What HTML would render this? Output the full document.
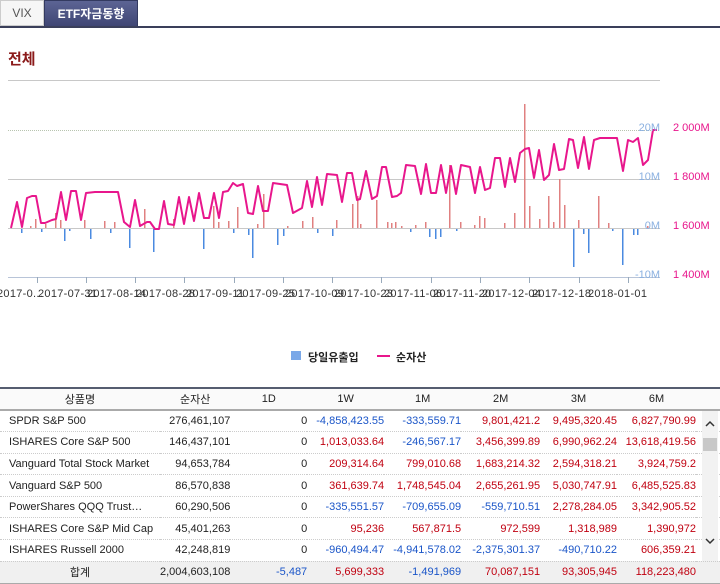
<!DOCTYPE html>
<html><head><meta charset="utf-8">
<style>
*{margin:0;padding:0;box-sizing:border-box}
body{width:720px;height:583px;background:#fff;font-family:"Liberation Sans","Noto Sans CJK KR","NanumGothic",sans-serif;position:relative;overflow:hidden;font-size:11px;color:#222}
.tab1{position:absolute;left:0;top:0;width:44px;height:26px;background:#f6f6f6;border:1px solid #ccc;text-align:center;line-height:25px;color:#555;font-size:12px}
.tab2{position:absolute;left:44px;top:0;width:94px;height:27px;background:linear-gradient(#5c6494,#3f4674);color:#fff;font-weight:bold;text-align:center;line-height:26px;font-size:12px;border:1px solid #333a60}
.bar{position:absolute;left:0;top:26px;width:720px;height:2px;background:#3a3f5a}
.title{position:absolute;left:8px;top:48px;color:#8b1a1a;font-size:15px;font-weight:bold}
svg{position:absolute;left:0;top:0}
table{position:absolute;left:0;top:387px;width:720px;border-collapse:collapse;border-top:2px solid #555d70}
td,th{height:21.6px;font-weight:normal;font-size:11px;white-space:nowrap;border-bottom:1px dotted #ccc;padding:0}
th{background:#fafafa;text-align:center;height:22px;border-bottom:2px solid #aaa}
td{text-align:right;padding-right:0}
td.n{text-align:left;padding-left:9px}
.b{color:#1a55c8}.r{color:#c00010}
tr.tot td{background:#f0f0f0;border-bottom:1px solid #aaa;height:22px}
.sb{position:absolute;left:702px;top:411px;width:16px;height:150px;background:#f2f2f2}
</style></head><body>
<div class="tab1">VIX</div><div class="tab2">ETF자금동향</div><div class="bar"></div>
<div class="title">전체</div>
<svg width="720" height="380" viewBox="0 0 720 380">
<g stroke="#c8c8c8" stroke-width="1">
<line x1="8" y1="80.5" x2="660" y2="80.5"/>
<line x1="8" y1="130.5" x2="660" y2="130.5" stroke="#b8c4b0" stroke-dasharray="1 1"/>
<line x1="8" y1="179.5" x2="660" y2="179.5"/>
<line x1="8" y1="228.5" x2="660" y2="228.5"/>
<line x1="8" y1="277.5" x2="660" y2="277.5" stroke="#b8c4d8"/>
</g>
<g stroke="#9ab" stroke-width="1">
<line x1="37.5" y1="277" x2="37.5" y2="283"/><line x1="86.5" y1="277" x2="86.5" y2="283"/><line x1="135.5" y1="277" x2="135.5" y2="283"/><line x1="184.5" y1="277" x2="184.5" y2="283"/><line x1="234.5" y1="277" x2="234.5" y2="283"/><line x1="283.5" y1="277" x2="283.5" y2="283"/><line x1="332.5" y1="277" x2="332.5" y2="283"/><line x1="381.5" y1="277" x2="381.5" y2="283"/><line x1="431.5" y1="277" x2="431.5" y2="283"/><line x1="480.5" y1="277" x2="480.5" y2="283"/><line x1="529.5" y1="277" x2="529.5" y2="283"/><line x1="579.5" y1="277" x2="579.5" y2="283"/><line x1="628.5" y1="277" x2="628.5" y2="283"/>
</g>
<g fill="#e08080">
<rect x="30" y="226" width="1.5" height="2"/><rect x="35" y="219" width="1.5" height="9"/><rect x="45" y="224" width="1.5" height="4"/><rect x="55" y="213" width="1.5" height="15"/><rect x="60" y="220" width="1.5" height="8"/><rect x="84" y="220" width="1.5" height="8"/><rect x="104" y="221" width="1.5" height="7"/><rect x="114" y="222" width="1.5" height="6"/><rect x="144" y="209" width="1.5" height="19"/><rect x="173" y="219" width="1.5" height="9"/><rect x="213" y="206" width="1.5" height="22"/><rect x="218" y="222" width="1.5" height="6"/><rect x="228" y="221" width="1.5" height="7"/><rect x="237" y="207" width="1.5" height="21"/><rect x="257" y="224" width="1.5" height="4"/><rect x="263" y="194" width="1.5" height="34"/><rect x="287" y="226" width="1.5" height="2"/><rect x="302" y="221" width="1.5" height="7"/><rect x="312" y="217" width="1.5" height="11"/><rect x="336" y="220" width="1.5" height="8"/><rect x="352" y="204" width="1.5" height="24"/><rect x="357" y="196" width="1.5" height="32"/>
<rect x="360" y="224" width="1.5" height="4"/><rect x="376" y="200" width="1.5" height="28"/><rect x="387" y="222" width="1.5" height="6"/><rect x="391" y="223" width="1.5" height="5"/><rect x="395" y="222" width="1.5" height="6"/><rect x="401" y="226" width="1.5" height="2"/><rect x="415" y="225" width="1.5" height="3"/><rect x="425" y="222" width="1.5" height="6"/><rect x="449" y="165" width="1.5" height="63"/><rect x="460" y="222" width="1.5" height="6"/><rect x="474" y="225" width="1.5" height="3"/><rect x="479" y="216" width="1.5" height="12"/><rect x="484" y="218" width="1.5" height="10"/><rect x="504" y="223" width="1.5" height="5"/><rect x="514" y="213" width="1.5" height="15"/><rect x="524" y="104" width="1.5" height="124"/><rect x="529" y="206" width="1.5" height="22"/><rect x="539" y="219" width="1.5" height="9"/><rect x="548" y="196" width="1.5" height="32"/><rect x="553" y="222" width="1.5" height="6"/><rect x="559" y="179" width="1.5" height="49"/><rect x="564" y="205" width="1.5" height="23"/><rect x="578" y="220" width="1.5" height="8"/><rect x="598" y="196" width="1.5" height="32"/><rect x="608" y="223" width="1.5" height="5"/><rect x="647" y="226" width="1.5" height="2"/>
</g>
<g fill="#4a8ae0">
<rect x="21" y="229" width="1.5" height="4"/><rect x="41" y="229" width="1.5" height="3"/><rect x="64" y="229" width="1.5" height="12"/><rect x="69" y="229" width="1.5" height="2"/><rect x="90" y="229" width="1.5" height="10"/><rect x="110" y="229" width="1.5" height="4"/><rect x="129" y="229" width="1.5" height="19"/><rect x="153" y="229" width="1.5" height="23"/><rect x="203" y="229" width="1.5" height="20"/><rect x="233" y="229" width="1.5" height="4"/><rect x="248" y="229" width="1.5" height="6"/><rect x="252" y="229" width="1.5" height="29"/><rect x="277" y="229" width="1.5" height="16"/><rect x="283" y="229" width="1.5" height="7"/><rect x="317" y="229" width="1.5" height="4"/><rect x="332" y="229" width="1.5" height="7"/>
<rect x="410" y="229" width="1.5" height="3"/><rect x="429" y="229" width="1.5" height="8"/><rect x="435" y="229" width="1.5" height="10"/><rect x="440" y="229" width="1.5" height="8"/><rect x="456" y="229" width="1.5" height="2"/><rect x="573" y="229" width="1.5" height="38"/><rect x="583" y="229" width="1.5" height="5"/><rect x="588" y="229" width="1.5" height="24"/><rect x="612" y="229" width="1.5" height="2"/><rect x="622" y="229" width="1.5" height="36"/><rect x="633" y="229" width="1.5" height="6"/><rect x="637" y="229" width="1.5" height="6"/>
</g>
<polyline fill="none" stroke="#e8168c" stroke-width="2" stroke-linejoin="round" points="11,228 17,202 22,227 27,198 32,196 36,196 41,223 45,223 52,220 56,219 61,192 66,220 71,191 76,191 81,220 86,193 95,192 118,192 124,222 130,227 135,200 140,226 147,222 150,222 155,229 159,229 164,201 168,224 174,225 179,197 184,224 189,197 194,221 199,193 204,218 209,218 214,193 219,218 223,192 228,191 233,183 237,186 243,184 248,213 253,214 258,186 263,211 268,211 273,183 287,185 293,213 302,208 307,181 312,207 317,177 322,205 327,174 337,175 342,202 347,173 352,173 357,200 360,199 366,171 372,199 377,196 382,167 386,167 392,197 397,196 401,193 406,165 415,166 421,194 426,164 431,193 436,193 441,165 446,193 451,166 456,194 461,165 470,167 475,193 480,167 485,190 490,188 495,158 500,158 505,187 510,158 515,182 520,153 525,149 529,148 534,178 539,150 544,180 549,175 554,144 559,170 564,169 569,139 573,140 578,168 584,137 589,169 594,140 600,138 617,138 623,171 628,140 633,142 638,138 643,165 648,160 653,130 657,130"/>
<g font-size="11" fill="#8ab0e0" text-anchor="end">
<text x="660" y="131">20M</text><text x="660" y="180">10M</text><text x="660" y="229">0M</text><text x="660" y="278">-10M</text>
</g>
<g font-size="11" fill="#e8168c">
<text x="673" y="131">2 000M</text><text x="673" y="180">1 800M</text><text x="673" y="229">1 600M</text><text x="673" y="278">1 400M</text>
</g>
<g font-size="11" fill="#333" letter-spacing="0.3">
<text x="-3" y="297">2017-0...</text><text x="38" y="297">2017-07-31</text><text x="87" y="297">2017-08-14</text><text x="136" y="297">2017-08-28</text><text x="186" y="297">2017-09-11</text><text x="236" y="297">2017-09-25</text><text x="285" y="297">2017-10-09</text><text x="334" y="297">2017-10-23</text><text x="384" y="297">2017-11-06</text><text x="433" y="297">2017-11-20</text><text x="482" y="297">2017-12-04</text><text x="532" y="297">2017-12-18</text><text x="588" y="297">2018-01-01</text>
</g>
<rect x="291" y="351" width="10" height="9" fill="#7aa8e8"/>
<text x="308" y="361" font-size="11" font-weight="bold" fill="#222">당일유출입</text>
<line x1="377" y1="356" x2="390" y2="356" stroke="#e8168c" stroke-width="2"/>
<text x="396" y="361" font-size="11" font-weight="bold" fill="#222">순자산</text>
</svg>
<table>
<colgroup><col style="width:160px"><col style="width:70px"><col style="width:77px"><col style="width:77px"><col style="width:77px"><col style="width:79px"><col style="width:77px"><col style="width:79px"><col style="width:24px"></colgroup>
<tr><th>상품명</th><th>순자산</th><th>1D</th><th>1W</th><th>1M</th><th>2M</th><th>3M</th><th>6M</th><th></th></tr>
<tr><td class="n">SPDR S&amp;P 500</td><td>276,461,107</td><td>0</td><td class="b">-4,858,423.55</td><td class="b">-333,559.71</td><td class="r">9,801,421.2</td><td class="r">9,495,320.45</td><td class="r">6,827,790.99</td><td></td></tr>
<tr><td class="n">ISHARES Core S&amp;P 500</td><td>146,437,101</td><td>0</td><td class="r">1,013,033.64</td><td class="b">-246,567.17</td><td class="r">3,456,399.89</td><td class="r">6,990,962.24</td><td class="r">13,618,419.56</td><td></td></tr>
<tr><td class="n">Vanguard Total Stock Market</td><td>94,653,784</td><td>0</td><td class="r">209,314.64</td><td class="r">799,010.68</td><td class="r">1,683,214.32</td><td class="r">2,594,318.21</td><td class="r">3,924,759.2</td><td></td></tr>
<tr><td class="n">Vanguard S&amp;P 500</td><td>86,570,838</td><td>0</td><td class="r">361,639.74</td><td class="r">1,748,545.04</td><td class="r">2,655,261.95</td><td class="r">5,030,747.91</td><td class="r">6,485,525.83</td><td></td></tr>
<tr><td class="n">PowerShares QQQ Trust…</td><td>60,290,506</td><td>0</td><td class="b">-335,551.57</td><td class="b">-709,655.09</td><td class="b">-559,710.51</td><td class="r">2,278,284.05</td><td class="r">3,342,905.52</td><td></td></tr>
<tr><td class="n">ISHARES Core S&amp;P Mid Cap</td><td>45,401,263</td><td>0</td><td class="r">95,236</td><td class="r">567,871.5</td><td class="r">972,599</td><td class="r">1,318,989</td><td class="r">1,390,972</td><td></td></tr>
<tr><td class="n">ISHARES Russell 2000</td><td>42,248,819</td><td>0</td><td class="b">-960,494.47</td><td class="b">-4,941,578.02</td><td class="b">-2,375,301.37</td><td class="b">-490,710.22</td><td class="r">606,359.21</td><td></td></tr>
<tr class="tot"><td style="text-align:center">합계</td><td>2,004,603,108</td><td class="b">-5,487</td><td class="r">5,699,333</td><td class="b">-1,491,969</td><td class="r">70,087,151</td><td class="r">93,305,945</td><td class="r">118,223,480</td><td></td></tr>
</table>
<div class="sb">
<svg width="16" height="150" style="position:absolute;left:0;top:0"><polyline points="4,15 8,11 12,15" fill="none" stroke="#333" stroke-width="1.5"/><rect x="1" y="27" width="14" height="13" fill="#c8c8c8"/><polyline points="4,128 8,132 12,128" fill="none" stroke="#333" stroke-width="1.5"/></svg>
</div>
</body></html>
